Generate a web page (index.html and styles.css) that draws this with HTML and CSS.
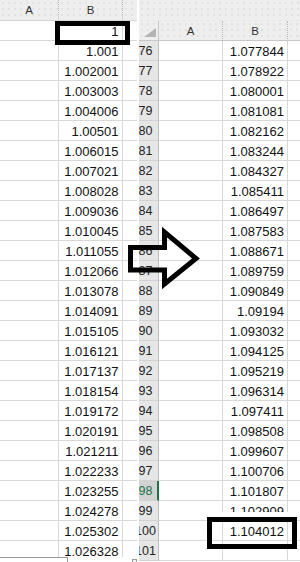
FILE: index.html
```html
<!DOCTYPE html>
<html>
<head>
<meta charset="utf-8">
<link rel="stylesheet" href="styles.css">
</head>
<body>
<div class="page">
  <section class="sheet sheet-left">
    <div class="view">
      <div class="row hdr">
        <div class="c ca">A</div><div class="c cb">B</div><div class="c cx"></div>
      </div>
      <div class="row"><div class="c ca"></div><div class="c cb">1</div><div class="c cx"></div></div>
      <div class="row"><div class="c ca"></div><div class="c cb">1.001</div><div class="c cx"></div></div>
      <div class="row"><div class="c ca"></div><div class="c cb">1.002001</div><div class="c cx"></div></div>
      <div class="row"><div class="c ca"></div><div class="c cb">1.003003</div><div class="c cx"></div></div>
      <div class="row"><div class="c ca"></div><div class="c cb">1.004006</div><div class="c cx"></div></div>
      <div class="row"><div class="c ca"></div><div class="c cb">1.00501</div><div class="c cx"></div></div>
      <div class="row"><div class="c ca"></div><div class="c cb">1.006015</div><div class="c cx"></div></div>
      <div class="row"><div class="c ca"></div><div class="c cb">1.007021</div><div class="c cx"></div></div>
      <div class="row"><div class="c ca"></div><div class="c cb">1.008028</div><div class="c cx"></div></div>
      <div class="row"><div class="c ca"></div><div class="c cb">1.009036</div><div class="c cx"></div></div>
      <div class="row"><div class="c ca"></div><div class="c cb">1.010045</div><div class="c cx"></div></div>
      <div class="row"><div class="c ca"></div><div class="c cb">1.011055</div><div class="c cx"></div></div>
      <div class="row"><div class="c ca"></div><div class="c cb">1.012066</div><div class="c cx"></div></div>
      <div class="row"><div class="c ca"></div><div class="c cb">1.013078</div><div class="c cx"></div></div>
      <div class="row"><div class="c ca"></div><div class="c cb">1.014091</div><div class="c cx"></div></div>
      <div class="row"><div class="c ca"></div><div class="c cb">1.015105</div><div class="c cx"></div></div>
      <div class="row"><div class="c ca"></div><div class="c cb">1.016121</div><div class="c cx"></div></div>
      <div class="row"><div class="c ca"></div><div class="c cb">1.017137</div><div class="c cx"></div></div>
      <div class="row"><div class="c ca"></div><div class="c cb">1.018154</div><div class="c cx"></div></div>
      <div class="row"><div class="c ca"></div><div class="c cb">1.019172</div><div class="c cx"></div></div>
      <div class="row"><div class="c ca"></div><div class="c cb">1.020191</div><div class="c cx"></div></div>
      <div class="row"><div class="c ca"></div><div class="c cb">1.021211</div><div class="c cx"></div></div>
      <div class="row"><div class="c ca"></div><div class="c cb">1.022233</div><div class="c cx"></div></div>
      <div class="row"><div class="c ca"></div><div class="c cb">1.023255</div><div class="c cx"></div></div>
      <div class="row"><div class="c ca"></div><div class="c cb">1.024278</div><div class="c cx"></div></div>
      <div class="row"><div class="c ca"></div><div class="c cb">1.025302</div><div class="c cx"></div></div>
      <div class="row"><div class="c ca"></div><div class="c cb">1.026328</div><div class="c cx"></div></div>
    </div>
    <div class="scroll"><span class="scroll-bar"></span><span class="scroll-btn"></span></div>
  </section>

  <section class="sheet sheet-right">
    <div class="band"></div>
    <div class="row hdr">
      <div class="c rn corner"><svg class="tri" width="12" height="9" viewBox="0 0 12 9"><polygon points="12,0 12,9 0,9" fill="#b4b4b4"/></svg></div>
      <div class="c ra">A</div><div class="c rb">B</div><div class="c rx"></div>
    </div>
    <div class="row"><div class="c rn"><span>76</span></div><div class="c ra"></div><div class="c rb">1.077844</div><div class="c rx"></div></div>
    <div class="row"><div class="c rn"><span>77</span></div><div class="c ra"></div><div class="c rb">1.078922</div><div class="c rx"></div></div>
    <div class="row"><div class="c rn"><span>78</span></div><div class="c ra"></div><div class="c rb">1.080001</div><div class="c rx"></div></div>
    <div class="row"><div class="c rn"><span>79</span></div><div class="c ra"></div><div class="c rb">1.081081</div><div class="c rx"></div></div>
    <div class="row"><div class="c rn"><span>80</span></div><div class="c ra"></div><div class="c rb">1.082162</div><div class="c rx"></div></div>
    <div class="row"><div class="c rn"><span>81</span></div><div class="c ra"></div><div class="c rb">1.083244</div><div class="c rx"></div></div>
    <div class="row"><div class="c rn"><span>82</span></div><div class="c ra"></div><div class="c rb">1.084327</div><div class="c rx"></div></div>
    <div class="row"><div class="c rn"><span>83</span></div><div class="c ra"></div><div class="c rb">1.085411</div><div class="c rx"></div></div>
    <div class="row"><div class="c rn"><span>84</span></div><div class="c ra"></div><div class="c rb">1.086497</div><div class="c rx"></div></div>
    <div class="row"><div class="c rn"><span>85</span></div><div class="c ra"></div><div class="c rb">1.087583</div><div class="c rx"></div></div>
    <div class="row"><div class="c rn"><span>86</span></div><div class="c ra"></div><div class="c rb">1.088671</div><div class="c rx"></div></div>
    <div class="row"><div class="c rn"><span>87</span></div><div class="c ra"></div><div class="c rb">1.089759</div><div class="c rx"></div></div>
    <div class="row"><div class="c rn"><span>88</span></div><div class="c ra"></div><div class="c rb">1.090849</div><div class="c rx"></div></div>
    <div class="row"><div class="c rn"><span>89</span></div><div class="c ra"></div><div class="c rb">1.09194</div><div class="c rx"></div></div>
    <div class="row"><div class="c rn"><span>90</span></div><div class="c ra"></div><div class="c rb">1.093032</div><div class="c rx"></div></div>
    <div class="row"><div class="c rn"><span>91</span></div><div class="c ra"></div><div class="c rb">1.094125</div><div class="c rx"></div></div>
    <div class="row"><div class="c rn"><span>92</span></div><div class="c ra"></div><div class="c rb">1.095219</div><div class="c rx"></div></div>
    <div class="row"><div class="c rn"><span>93</span></div><div class="c ra"></div><div class="c rb">1.096314</div><div class="c rx"></div></div>
    <div class="row"><div class="c rn"><span>94</span></div><div class="c ra"></div><div class="c rb">1.097411</div><div class="c rx"></div></div>
    <div class="row"><div class="c rn"><span>95</span></div><div class="c ra"></div><div class="c rb">1.098508</div><div class="c rx"></div></div>
    <div class="row"><div class="c rn"><span>96</span></div><div class="c ra"></div><div class="c rb">1.099607</div><div class="c rx"></div></div>
    <div class="row"><div class="c rn"><span>97</span></div><div class="c ra"></div><div class="c rb">1.100706</div><div class="c rx"></div></div>
    <div class="row"><div class="c rn sel"><span>98</span></div><div class="c ra"></div><div class="c rb">1.101807</div><div class="c rx"></div></div>
    <div class="row"><div class="c rn"><span>99</span></div><div class="c ra"></div><div class="c rb">1.102909</div><div class="c rx"></div></div>
    <div class="row"><div class="c rn"><span>100</span></div><div class="c ra"></div><div class="c rb">1.104012</div><div class="c rx"></div></div>
    <div class="row"><div class="c rn"><span>101</span></div><div class="c ra"></div><div class="c rb"></div><div class="c rx"></div></div>
  </section>

  <div class="mark mark-top"></div>
  <div class="mark mark-bottom"></div>
  <svg class="arrow" width="300" height="562" viewBox="0 0 300 562">
    <polygon points="130.5,247.5 164.5,247.5 164.5,232 196,258.5 164.5,284 164.5,270 130.5,270" fill="none" stroke="#000" stroke-width="5" stroke-linejoin="miter"/>
  </svg>
</div>
</body>
</html>
```

FILE: styles.css
```css
* { box-sizing: border-box; }
html, body { margin: 0; padding: 0; background: #fff; }
body {
  font-family: "Liberation Sans", Arial, sans-serif;
  color: #111;
}
.page {
  position: relative;
  width: 300px;
  height: 562px;
  overflow: hidden;
  display: flex;
  gap: 2px;
  background: #fff;
}
.sheet {
  display: flex;
  flex-direction: column;
  overflow: hidden;
  height: 562px;
}
.sheet-left { width: 137px; }
.sheet-right { width: 161px; }

.view {
  height: 557px;
  overflow: hidden;
  flex: none;
}
.row {
  display: flex;
  height: 20px;
  flex: none;
}
.c {
  height: 20px;
  border-bottom: 1px solid #d8d8d8;
  border-right: 1px solid #d8d8d8;
  font-size: 13px;
  line-height: 21px;
  text-align: right;
  padding-right: 3px;
  white-space: nowrap;
  overflow: hidden;
}
.ca { width: 59px; }
.cb { width: 64px; padding-right: 3.5px; }
.cx { width: 14px; border-right: none; }

.ra { width: 64px; }
.rb { width: 65px; }
.rx { width: 12px; border-right: none; }

.hdr { height: 21px; }
.hdr .c {
  height: 21px;
  line-height: 21px;
  background-color: #eeeeee;
  background-image: radial-gradient(circle, #d2d2d2 0.6px, transparent 0.8px);
  background-size: 6px 6px;
  border-bottom: 1px solid #d6d6d6;
  border-right: 1px dotted #b8b8b8;
  text-align: center;
  padding: 0;
  font-size: 11.5px;
  color: #333;
}
.hdr .cx, .hdr .rx { border-right: none; }
.sheet-right .hdr { height: 20px; }
.sheet-right .hdr .c { height: 20px; line-height: 20px; border-bottom-color: #c8c8c8; }

.band {
  height: 21px;
  flex: none;
  background-color: #eeeeee;
  background-image: radial-gradient(circle, #d2d2d2 0.6px, transparent 0.8px);
  background-size: 6px 6px;
}

.rn {
  width: 20px;
  padding: 0;
  background: #e6e6e6;
  border-right: 1px solid #bdbdbd;
  border-bottom: 1px solid #d2d2d2;
  font-size: 12.5px;
  color: #222;
}
.rn span {
  display: block;
  width: 25px;
  margin-left: -6px;
  text-align: center;
}
.rn.sel {
  background: #d3d3d3;
  color: #217346;
  border-right: 2px solid #217346;
}
.hdr .corner {
  border-right: 1px solid #c8c8c8;
  display: flex;
  align-items: flex-end;
  justify-content: flex-end;
  padding: 0 2px 3px 0;
}
.tri { display: block; }

.scroll {
  flex: none;
  height: 5px;
  display: flex;
  align-items: flex-start;
  justify-content: space-between;
}
.scroll-bar {
  width: 68px;
  height: 5px;
  border-top: 1px solid #9a9a9a;
  border-right: 1px solid #9a9a9a;
  background: #fff;
}
.scroll-btn {
  width: 5px;
  height: 4px;
  margin-top: 2px;
  border: 1px solid #9a9a9a;
  border-bottom: none;
  background: #f4f4f4;
}

.mark {
  position: absolute;
  border: 5px solid #000;
  pointer-events: none;
}
.mark-top {
  left: 55px;
  top: 21px;
  width: 75px;
  height: 24px;
}
.mark-bottom {
  left: 207px;
  top: 517px;
  width: 90px;
  height: 32px;
  box-shadow: 0 -5px 0 0 #fff;
}
.arrow {
  position: absolute;
  left: 0;
  top: 0;
  pointer-events: none;
}
```
